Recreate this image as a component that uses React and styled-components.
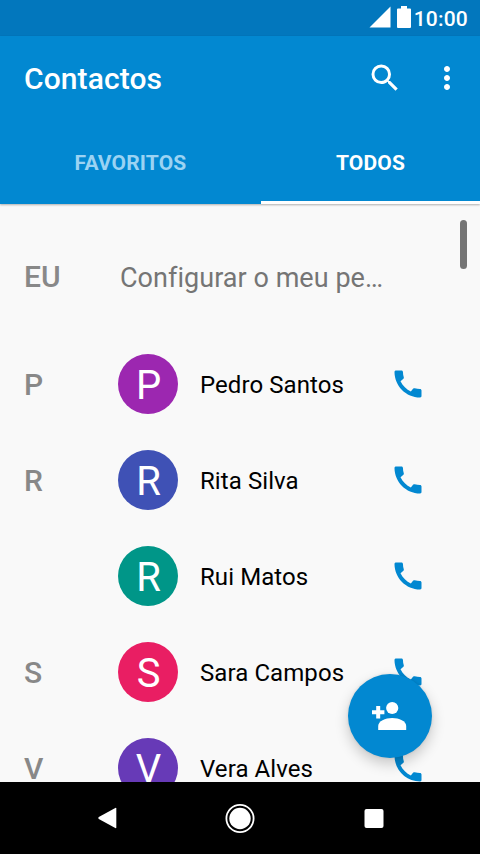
import styled, { createGlobalStyle } from "styled-components";
import { MdCall, MdMoreVert, MdSearch } from "react-icons/md";

const contacts = [
  { section: "P", name: "Pedro Santos", color: "#9c27b0" },
  { section: "R", name: "Rita Silva", color: "#3f51b5" },
  { section: "", name: "Rui Matos", color: "#009688" },
  { section: "S", name: "Sara Campos", color: "#e91e63" },
  { section: "V", name: "Vera Alves", color: "#673ab7" },
];

const App = () => {
  return (
    <Screen>
      <GlobalStyle />
      <StatusBar>
        <svg width="22" height="22" viewBox="0 0 22 22" fill="#fff">
          <path d="M21.500 0.500V21.500H0.500Z" />
        </svg>
        <svg width="14" height="22" viewBox="0 0 14 22" fill="#fff">
          <path d="M4 0h6v2.500h3q1 0 1 1V21q0 1-1 1H1q-1 0-1-1V3.500q0-1 1-1h3z" />
        </svg>
        <Clock>10:00</Clock>
      </StatusBar>
      <Header>
        <Toolbar>
          <Title>Contactos</Title>
          <IconButton aria-label="Pesquisar">
            <MdSearch size={36} />
          </IconButton>
          <IconButton aria-label="Mais opções">
            <MdMoreVert size={36} />
          </IconButton>
        </Toolbar>
        <Tabs>
          <Tab>FAVORITOS</Tab>
          <Tab $active>TODOS</Tab>
        </Tabs>
      </Header>
      <List>
        <ProfileRow>
          <Section>EU</Section>
          <ProfileText>Configurar o meu pe…</ProfileText>
        </ProfileRow>
        {contacts.map((item) => (
          <Row key={item.name}>
            <Section>{item.section}</Section>
            <Avatar $color={item.color}>{item.name[0]}</Avatar>
            <Name>{item.name}</Name>
            <CallIcon size={36} />
          </Row>
        ))}
        <ScrollThumb />
        <AddButton aria-label="Adicionar contacto">
          <svg width="36" height="30" viewBox="0 0 36 30" fill="#fff">
            <path d="M4.200 5h4v4.200h4.200v4H8.200v4.200h-4v-4.200H0v-4h4.200z" />
            <circle cx="20.200" cy="7" r="6.100" />
            <path d="M6.200 29v-4c0-5 7-8 14-8s14 3 14 8v4z" />
          </svg>
        </AddButton>
      </List>
      <NavBar>
        <NavButton aria-label="Voltar">
          <svg width="30" height="30" viewBox="0 0 30 30" fill="#fff">
            <path d="M25.300 5.500v19q0 1-1 .600L7.800 15.900q-1.200-.900 0-1.800L24.300 4.900q1-.400 1 .600z" />
          </svg>
        </NavButton>
        <NavButton aria-label="Início">
          <svg width="30" height="30" viewBox="0 0 30 30" fill="#fff">
            <circle cx="15" cy="15.500" r="10.700" />
            <circle cx="15" cy="15.500" r="13.600" fill="none" stroke="#fff" strokeWidth="1.800" />
          </svg>
        </NavButton>
        <NavButton aria-label="Recentes">
          <svg width="30" height="30" viewBox="0 0 30 30" fill="#fff">
            <rect x="5.500" y="6" width="19" height="19" rx="2" />
          </svg>
        </NavButton>
      </NavBar>
    </Screen>
  );
};

const GlobalStyle = createGlobalStyle`
  * {
    box-sizing: border-box;
  }
  body {
    margin: 0;
    font-family: Roboto, sans-serif;
  }
  svg {
    display: block;
    flex-shrink: 0;
  }
`;

const Screen = styled.div`
  display: flex;
  flex-direction: column;
  width: 480px;
  height: 854px;
  overflow: hidden;
  background: #f9f9f9;
`;

const StatusBar = styled.div`
  display: flex;
  flex-shrink: 0;
  align-items: center;
  justify-content: flex-end;
  gap: 6px;
  height: 36px;
  padding: 0 12px 2px 0;
  background: #0277bd;
`;

const Clock = styled.span`
  margin-left: -3px;
  padding-top: 3px;
  font-size: 21px;
  font-weight: 500;
  line-height: 24px;
  letter-spacing: 0.2px;
  color: #fff;
`;

const Header = styled.header`
  position: relative;
  z-index: 1;
  flex-shrink: 0;
  height: 168px;
  background: #0288d1;
  box-shadow: 0 1px 2px rgba(0, 0, 0, 0.3);
`;

const Toolbar = styled.div`
  display: flex;
  align-items: center;
  height: 84px;
  padding: 0 15px 0 24px;
`;

const Title = styled.h1`
  flex: 1;
  margin: 0;
  font-size: 30px;
  font-weight: 500;
  letter-spacing: 0.1px;
  color: #fff;
`;

const IconButton = styled.button`
  display: flex;
  margin-left: 26px;
  padding: 0;
  border: 0;
  background: none;
  color: #fff;
`;

const Tabs = styled.nav`
  display: grid;
  grid-template-columns: 261px 219px;
  height: 84px;
`;

const Tab = styled.button`
  padding: 5px 0 0;
  border: 0;
  border-bottom: 3px solid ${({ $active }) => ($active ? "#fff" : "transparent")};
  background: none;
  font-family: inherit;
  font-size: 21px;
  font-weight: 700;
  letter-spacing: 0.15px;
  color: ${({ $active }) => ($active ? "#fff" : "#9bd3f3")};
`;

const List = styled.main`
  position: relative;
  flex: 1;
  min-height: 0;
  padding-top: 12px;
  overflow: hidden;
`;

const Row = styled.div`
  display: flex;
  align-items: center;
  height: 96px;
  padding: 0 54px 0 24px;
`;

const ProfileRow = styled(Row)`
  height: 120px;
`;

const Section = styled.span`
  flex-shrink: 0;
  width: 94px;
  font-size: 30px;
  font-weight: 500;
  color: #888;
`;

const ProfileText = styled.span`
  padding: 3px 0 0 2px;
  font-size: 27px;
  letter-spacing: 0.04px;
  white-space: nowrap;
  color: #757575;
`;

const Avatar = styled.span`
  display: flex;
  flex-shrink: 0;
  align-items: center;
  justify-content: center;
  width: 60px;
  height: 60px;
  padding: 2px 0 0 1px;
  border-radius: 50%;
  background: ${({ $color }) => $color};
  font-size: 40px;
  color: #fff;
`;

const Name = styled.span`
  flex: 1;
  padding: 2px 0 0 22px;
  font-size: 24px;
  letter-spacing: 0.08px;
  color: #000;
`;

const CallIcon = styled(MdCall)`
  color: #0288d1;
`;

const ScrollThumb = styled.div`
  position: absolute;
  top: 16px;
  right: 13px;
  width: 7px;
  height: 49px;
  border-radius: 4px;
  background: #757575;
`;

const AddButton = styled.button`
  position: absolute;
  right: 48px;
  bottom: 24px;
  display: flex;
  align-items: center;
  justify-content: center;
  width: 84px;
  height: 84px;
  padding: 0;
  border: 0;
  border-radius: 50%;
  background: #0288d1;
  box-shadow: 0 6px 14px rgba(0, 0, 0, 0.2), 0 0 3px rgba(0, 0, 0, 0.1);
`;

const NavBar = styled.footer`
  display: flex;
  flex-shrink: 0;
  align-items: center;
  justify-content: center;
  height: 72px;
  padding-right: 1px;
  background: #000;
`;

const NavButton = styled.button`
  display: flex;
  justify-content: center;
  width: 134px;
  padding: 0;
  border: 0;
  background: none;
`;

export default App;
